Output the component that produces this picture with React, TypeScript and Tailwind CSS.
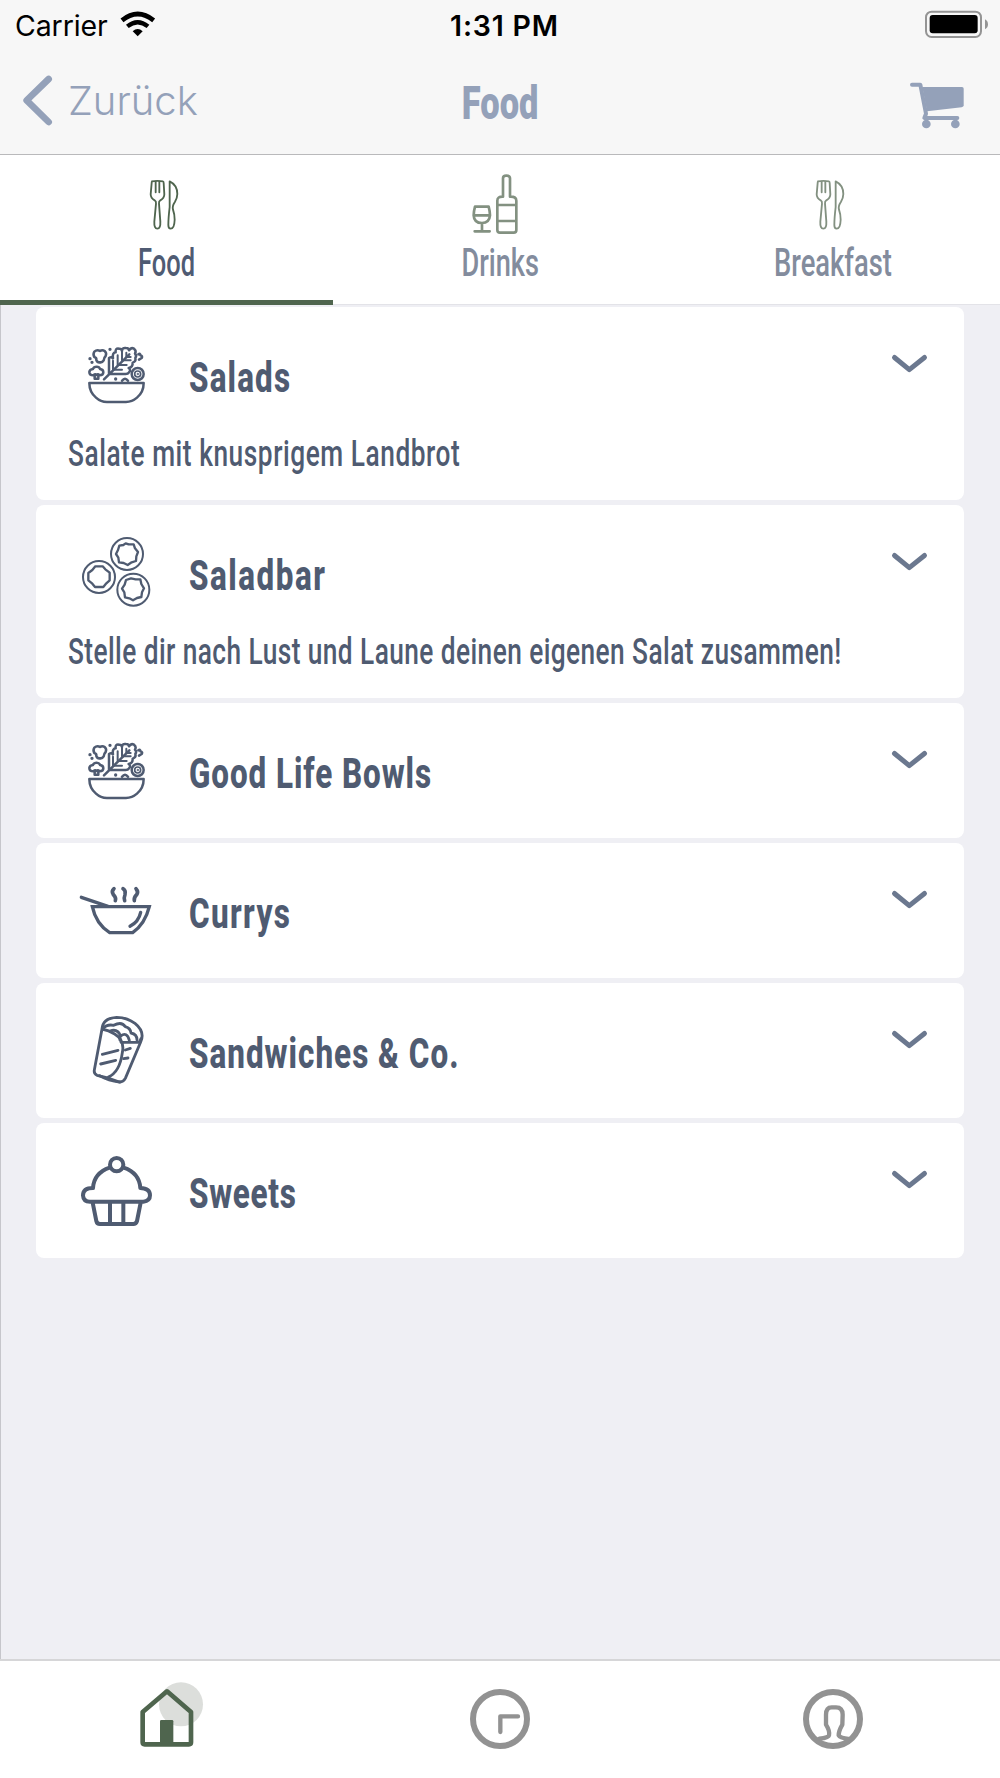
import { useState, type ReactNode } from "react";

interface Category {
  title: string;
  titleClass: string;
  icon: ReactNode;
  description?: string;
  descriptionClass?: string;
}

function CutleryIcon() {
  return (
    <svg viewBox="380 36 240 216" className="w-20 h-[72px]" fill="none" stroke="currentColor" strokeWidth="5.5" strokeLinecap="round" strokeLinejoin="round">
      <path d="M455 79Q471 76 488 79Q490 79 490 84L492 118Q492 130 480 136Q475 139 476 146L480 200Q481 221 471 221Q461 221 462 200L467 146Q468 139 463 136Q451 130 451 118L454 84Q454 80 455 79" />
      <path d="M466 80V112M477 80V112" />
      <path d="M508 79Q531 90 531 117Q531 128 524 140Q515 153 518 164Q523 178 523 194Q522 221 511 221Q504 221 504 210Q504 190 508 156Z" />
    </svg>
  );
}

function DrinksIcon() {
  return (
    <svg viewBox="0 36 240 216" className="w-20 h-[72px]" fill="none" stroke="currentColor" strokeWidth="8" strokeLinecap="round" strokeLinejoin="round">
      <path d="M45 155H86Q90 170 90 181Q88 204 66 204Q42 204 41 181Q41 170 45 155ZM42 181H89M66 205V228M44 229H89" />
      <path d="M129 125V70Q129 62 139 62Q150 62 150 70V125Q169 124 169 137V225Q169 233 161 233H120Q112 233 112 225V137Q112 124 129 125M112 150H169M112 198H169" />
    </svg>
  );
}

function CardIcon({ viewBox, strokeWidth, children }: { viewBox: string; strokeWidth: number; children: ReactNode }) {
  return (
    <svg viewBox={viewBox} className="w-[78px] h-20 mt-7 shrink-0" fill="none" stroke="currentColor" strokeWidth={strokeWidth} strokeLinecap="round" strokeLinejoin="round">
      {children}
    </svg>
  );
}

function SaladIcon() {
  return (
    <CardIcon viewBox="144 105 234 240" strokeWidth={7.5}>
      <path d="M178 249H341Q341 276 321 293Q306 306 288 306H231Q212 306 198 293Q178 276 178 249Z" />
      {/* floret and mushroom */}
      <path d="M210 153Q217 148 224 153Q231 159 227 168Q222 173 221 181Q217 188 210 187Q202 188 199 180Q200 173 193 171Q188 163 193 155Q201 148 210 153Z" />
      <path d="M190 226Q178 226 178 216Q179 208 189 207Q191 200 200 200Q208 200 210 207Q220 208 220 217Q220 226 209 226Q204 220 200 225Q195 220 190 226ZM194 228V236H205V228" />
      {/* lettuce leaf */}
      <path d="M222 238L298 163M237 222V174Q244 169 249 175Q246 158 257 157Q255 144 267 146Q275 145 276 153Q276 142 288 144Q296 144 297 151Q303 141 312 146Q320 152 315 161Q321 166 316 174Q319 185 308 188Q309 202 296 204Q304 210 297 217Q294 222 287 222H239" />
      <path d="M249 182V209H276M263 166V195H290M276 156V181H302M289 158V171H302" strokeWidth="6" />
      <circle cx="323" cy="222" r="18" />
      <circle cx="323" cy="222" r="9" strokeWidth="5" />
      <circle cx="323" cy="222" r="2" strokeWidth="3" />
      <path d="M325 163Q331 159 331 166Q339 168 335 174L327 179M276 242Q285 230 294 242" />
      <path d="M240 148V148.1M180 176V176.1M186 187V187.1M257 237V237.1" strokeWidth="10" />
    </CardIcon>
  );
}

function SaladbarIcon() {
  return (
    <CardIcon viewBox="144 99 234 240" strokeWidth={6}>
      <circle cx="291" cy="162" r="48" />
      <circle cx="207" cy="231" r="48" />
      <circle cx="310" cy="269" r="48" />
      <path d="M287 130L296 133L311 133L315 145L324 156L319 169L318 183L305 187L293 195L281 189L267 187L265 173L258 162L264 150L268 137L280 135Z" strokeWidth="7" />
      <path d="M196 199H218L226 208L239 218V241L229 250L220 261H195L187 251L175 241V219L187 210Z" strokeWidth="7" />
      <path d="M303 235L317 238L331 238L334 252L342 265L336 277L334 291L321 294L309 301L298 295L285 292L283 277L276 266L284 254L288 240Z" strokeWidth="7" />
    </CardIcon>
  );
}

function CurryIcon() {
  return (
    <CardIcon viewBox="144 513 234 240" strokeWidth={10}>
      <path d="M187 620H358Q345 672 308 698H239Q198 672 187 620ZM154 592L234 619" strokeLinejoin="miter" />
      <path d="M332 637Q326 665 300 679" />
      <path d="M252 566Q243 574 250 584Q260 594 256 602M279 566Q288 571 285 584Q281 594 284 602M318 566Q326 575 320 584Q311 593 313 602" strokeWidth="11" />
    </CardIcon>
  );
}

function WrapIcon() {
  return (
    <CardIcon viewBox="144 93 234 240" strokeWidth={8.5}>
      <path d="M216 147L193 270Q191 281 201 286L230 293L264 305Q278 309 286 295L332 186Q346 155 315 130Q289 112 260 112Q219 114 216 147Q236 151 254 162Q285 181 277 218Q269 277 235 291" />
      <path d="M209 287Q236 302 269 306M218 146Q231 132 251 136Q275 123 286 140Q302 145 303 159Q321 162 321 180M273 187H328L333 176M240 153Q263 145 272 168Q291 154 298 181M270 165V181" />
      <path d="M217 223L264 211M212 252L257 241M286 210L301 205M281 236L294 234" />
    </CardIcon>
  );
}

function CupcakeIcon() {
  return (
    <CardIcon viewBox="144 513 234 240" strokeWidth={12}>
      <circle cx="260" cy="554" r="20" />
      <path d="M239 563Q192 579 189 624Q159 624 159 646Q160 665 180 665H340Q360 663 360 646Q360 625 331 624Q328 579 281 563M188 668L199 723Q201 732 210 732H310Q318 732 321 723L332 668M240 668V730M280 668V730" />
    </CardIcon>
  );
}

function ChevronDown() {
  return (
    <svg viewBox="0 0 40 24" className="w-10 h-6 mt-[45px] ml-auto mr-[34px] shrink-0 text-[#6b788f]" fill="none" stroke="currentColor" strokeWidth="5" strokeLinecap="round" strokeLinejoin="round">
      <path d="M4.5 5.5L19.3 17.6L34.5 5.5" />
    </svg>
  );
}

const categories: Category[] = [
  {
    title: "Salads",
    titleClass: "scale-x-[0.73] tracking-[1.6px]",
    icon: <SaladIcon />,
    description: "Salate mit knusprigem Landbrot",
    descriptionClass: "scale-x-[0.7] tracking-[0.8px]",
  },
  {
    title: "Saladbar",
    titleClass: "scale-x-[0.73] tracking-[2.1px]",
    icon: <SaladbarIcon />,
    description: "Stelle dir nach Lust und Laune deinen eigenen Salat zusammen!",
    descriptionClass: "scale-x-[0.7] tracking-[0.62px]",
  },
  { title: "Good Life Bowls", titleClass: "scale-x-[0.73] tracking-[1.3px]", icon: <SaladIcon /> },
  { title: "Currys", titleClass: "scale-x-[0.73] tracking-[1.9px]", icon: <CurryIcon /> },
  { title: "Sandwiches & Co.", titleClass: "scale-x-[0.73] tracking-[1.4px]", icon: <WrapIcon /> },
  { title: "Sweets", titleClass: "scale-x-[0.73] tracking-[1px]", icon: <CupcakeIcon /> },
];

const tabs = [
  { name: "Food", labelClass: "scale-x-[0.67]", icon: <CutleryIcon /> },
  { name: "Drinks", labelClass: "scale-x-[0.715]", icon: <DrinksIcon /> },
  { name: "Breakfast", labelClass: "scale-x-[0.72]", icon: <CutleryIcon /> },
];

function Header() {
  return (
    <header className="h-[155px] shrink-0 bg-[#f7f7f7] border-b border-[#b9b9bb]">
      <div className="h-[50px] grid grid-cols-3 text-black">
        <div className="flex items-start pl-[15px]">
          <span className="text-[28.5px] leading-[51px] tracking-[-0.1px]">Carrier</span>
          <svg viewBox="360 30 108 84" className="w-9 h-7 mt-2.5 ml-3" fill="none" stroke="black">
            <path d="M366 61Q413 23 461 61" strokeWidth="14" />
            <path d="M382 79Q413 54 444 79" strokeWidth="13" />
            <path d="M398 94Q413 80 428 94L413 109Z" fill="black" stroke="none" />
          </svg>
        </div>
        <div className="text-center text-[28.5px] leading-[51px] font-semibold tracking-[0.8px] pl-[9px]">1:31 PM</div>
        <div className="flex justify-end pr-[11px]">
          <svg viewBox="1272 27 195 93" className="w-[65px] h-[31px] mt-[9px]">
            <rect x="1278" y="35" width="165" height="76" rx="17" fill="none" stroke="#949494" strokeWidth="6" />
            <rect x="1289" y="45" width="144" height="55" rx="9" fill="black" />
            <path d="M1455 58Q1464 63 1464 73Q1464 83 1455 88Z" fill="#949494" />
          </svg>
        </div>
      </div>
      <div className="h-[104px] grid grid-cols-3 text-[#94a1b9]">
        <div className="flex items-start pl-5">
          <svg viewBox="60 216 105 165" className="w-[35px] h-[55px] mt-[22px]" fill="none" stroke="currentColor" strokeWidth="20" strokeLinecap="round" strokeLinejoin="round">
            <path d="M146 237L80 301L146 366" />
          </svg>
          <span className="text-[40px] leading-[50px] mt-[26px] ml-[13px] font-light">Zurück</span>
        </div>
        <h1 className="flex justify-center font-[Roboto] font-black text-[46px] leading-[50px] mt-[28px]">
          <span className="scale-x-[0.75]">Food</span>
        </h1>
        <div className="flex justify-end pr-[34px]">
          <svg viewBox="1227 237 171 156" className="w-[57px] h-[52px] mt-[29px]" fill="none" stroke="currentColor" strokeWidth="12" strokeLinecap="round" strokeLinejoin="round">
            <path d="M1236 254H1261L1278 341L1273 354H1372" />
            <path d="M1267 261H1386Q1391 261 1391 266V316Q1391 321 1385 322L1281 334Z" fill="currentColor" stroke="none" />
            <circle cx="1279" cy="372" r="13" fill="currentColor" stroke="none" />
            <circle cx="1366" cy="372" r="13" fill="currentColor" stroke="none" />
          </svg>
        </div>
      </div>
    </header>
  );
}

function CategoryCard({ category }: { category: Category }) {
  return (
    <div className="bg-white rounded-[8px]">
      <div className={`flex items-start pl-[42px] ${category.description ? "h-[118px]" : "h-[135px]"}`}>
        {category.icon}
        <h2 className="font-[Roboto] font-extrabold text-[43px] leading-[56px] mt-[42px] ml-[33px] whitespace-nowrap">
          <span className={`inline-block origin-left ${category.titleClass}`}>{category.title}</span>
        </h2>
        <ChevronDown />
      </div>
      {category.description && (
        <p className="h-[75px] w-[900px] pl-8 font-[Roboto] font-medium text-[37.5px] leading-[56px] whitespace-nowrap">
          <span className={`inline-block origin-left ${category.descriptionClass}`}>{category.description}</span>
        </p>
      )}
    </div>
  );
}

function BottomNav() {
  return (
    <nav className="h-[119px] shrink-0 bg-white border-t-2 border-[#d6d6d8] grid grid-cols-3 text-[#929292]">
      <svg viewBox="405 108 216 228" className="w-[72px] h-[76px] mt-[15px] ml-[135px]">
        <circle cx="543" cy="193" r="66" fill="#dcdedb" />
        <path d="M428 216L501 154L573 216V307Q573 313 567 313H434Q428 313 428 307Z" fill="none" stroke="#4f654e" strokeWidth="14" strokeLinejoin="round" />
        <path d="M434 219L501 161V306H434Z" fill="none" />
        <rect x="480" y="240" width="40" height="72" rx="4" fill="#4f654e" />
      </svg>
      <svg viewBox="0 0 180 180" className="w-[60px] h-[60px] mt-7 mx-auto" fill="none" stroke="currentColor" strokeLinecap="round" strokeLinejoin="round">
        <circle cx="90" cy="90" r="81" strokeWidth="18" />
        <path d="M91 129V82H144" strokeWidth="13" />
      </svg>
      <svg viewBox="0 0 180 180" className="w-[60px] h-[60px] mt-7 mx-auto" fill="none" stroke="currentColor" strokeLinecap="round" strokeLinejoin="round">
        <circle cx="90" cy="90" r="81" strokeWidth="18" />
        <path d="M49 149Q77 146 78 139Q81 126 69 107V77Q69 55 86 55H99Q119 55 119 77L118 107Q107 126 107 139Q111 147 136 150" strokeWidth="13" />
      </svg>
    </nav>
  );
}

export default function App() {
  const [activeTab, setActiveTab] = useState("Food");

  return (
    <div className="w-[1000px] h-[1778px] flex flex-col overflow-hidden bg-[#efeff4] font-[Inter,sans-serif]">
      <Header />

      <div className="h-[150px] shrink-0 grid grid-cols-3 bg-white border-b border-[#e3e3e8]">
        {tabs.map(tab => (
          <button
            key={tab.name}
            onClick={() => setActiveTab(tab.name)}
            className={`h-[150px] flex flex-col items-center pt-3 border-b-[5px] ${activeTab === tab.name ? "border-[#4f654e]" : "border-transparent"}`}
          >
            <div className={activeTab === tab.name ? "text-[#4f654e]" : "text-[#839181]"}>{tab.icon}</div>
            <span className={`font-[Roboto] font-medium text-[38px] leading-[48px] ${tab.labelClass} ${activeTab === tab.name ? "text-[#4f5b73]" : "text-[#838c9d]"}`}>
              {tab.name}
            </span>
          </button>
        ))}
      </div>

      <main className="grow flex flex-col gap-[5px] pt-[2px] pl-[35px] pr-9 border-l border-[#c6c6cb] text-[#4f5b71]">
        {categories.map(category => (
          <CategoryCard key={category.title} category={category} />
        ))}
      </main>

      <BottomNav />
    </div>
  );
}
